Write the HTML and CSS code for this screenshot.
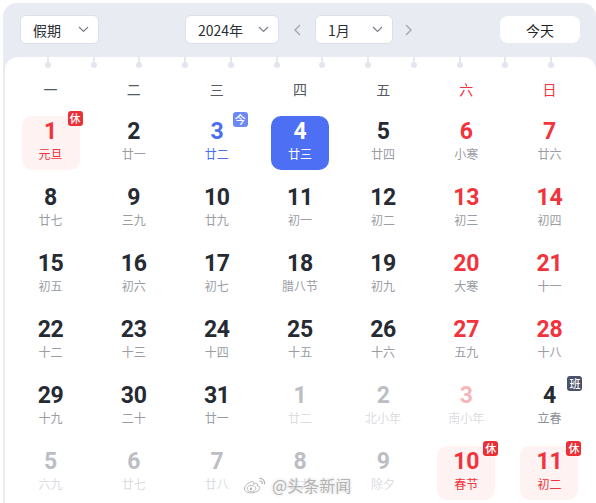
FILE: index.html
```html
<!DOCTYPE html>
<html lang="zh-CN">
<head>
<meta charset="utf-8">
<title>日历</title>
<link rel="stylesheet" href="styles.css">
</head>
<body>
<div class="panel">
  <div class="toolbar">
    <div class="select sel-holiday"><span>假期</span><svg class="chev" width="11" height="7" viewBox="0 0 11 7"><polyline points="1,1 5.5,5.5 10,1" fill="none" stroke="#7a7f8c" stroke-width="1.2"/></svg></div>
    <div class="select sel-year"><span>2024年</span><svg class="chev" width="11" height="7" viewBox="0 0 11 7"><polyline points="1,1 5.5,5.5 10,1" fill="none" stroke="#7a7f8c" stroke-width="1.2"/></svg></div>
    <div class="arrow arrow-prev"><svg width="7" height="12" viewBox="0 0 7 12"><polyline points="6,1 1,6 6,11" fill="none" stroke="#a3a7b2" stroke-width="1.4"/></svg></div>
    <div class="select sel-month"><span>1月</span><svg class="chev" width="11" height="7" viewBox="0 0 11 7"><polyline points="1,1 5.5,5.5 10,1" fill="none" stroke="#7a7f8c" stroke-width="1.2"/></svg></div>
    <div class="arrow arrow-next"><svg width="7" height="12" viewBox="0 0 7 12"><polyline points="1,1 6,6 1,11" fill="none" stroke="#a3a7b2" stroke-width="1.4"/></svg></div>
    <div class="today-btn">今天</div>
  </div>
  <div class="card">
    <div class="pegs">
      <i class="peg"></i><i class="peg"></i><i class="peg"></i><i class="peg"></i><i class="peg"></i><i class="peg"></i>
      <i class="peg"></i><i class="peg"></i><i class="peg"></i><i class="peg"></i><i class="peg"></i><i class="peg"></i>
    </div>
    <div class="weekdays">
      <div class="wd">一</div><div class="wd">二</div><div class="wd">三</div><div class="wd">四</div><div class="wd">五</div><div class="wd weekend">六</div><div class="wd weekend">日</div>
    </div>
    <div class="grid">
      <div class="cell"><div class="box hol red"><span class="num">1</span><span class="lunar fest">元旦</span><b class="badge b-rest">休</b></div></div>
      <div class="cell"><div class="box"><span class="num">2</span><span class="lunar">廿一</span></div></div>
      <div class="cell"><div class="box today"><span class="num">3</span><span class="lunar">廿二</span><b class="badge b-today">今</b></div></div>
      <div class="cell"><div class="box selected"><span class="num">4</span><span class="lunar">廿三</span></div></div>
      <div class="cell"><div class="box"><span class="num">5</span><span class="lunar">廿四</span></div></div>
      <div class="cell"><div class="box red"><span class="num">6</span><span class="lunar">小寒</span></div></div>
      <div class="cell"><div class="box red"><span class="num">7</span><span class="lunar">廿六</span></div></div>

      <div class="cell"><div class="box"><span class="num">8</span><span class="lunar">廿七</span></div></div>
      <div class="cell"><div class="box"><span class="num">9</span><span class="lunar">三九</span></div></div>
      <div class="cell"><div class="box"><span class="num">10</span><span class="lunar">廿九</span></div></div>
      <div class="cell"><div class="box"><span class="num">11</span><span class="lunar">初一</span></div></div>
      <div class="cell"><div class="box"><span class="num">12</span><span class="lunar">初二</span></div></div>
      <div class="cell"><div class="box red"><span class="num">13</span><span class="lunar">初三</span></div></div>
      <div class="cell"><div class="box red"><span class="num">14</span><span class="lunar">初四</span></div></div>

      <div class="cell"><div class="box"><span class="num">15</span><span class="lunar">初五</span></div></div>
      <div class="cell"><div class="box"><span class="num">16</span><span class="lunar">初六</span></div></div>
      <div class="cell"><div class="box"><span class="num">17</span><span class="lunar">初七</span></div></div>
      <div class="cell"><div class="box"><span class="num">18</span><span class="lunar">腊八节</span></div></div>
      <div class="cell"><div class="box"><span class="num">19</span><span class="lunar">初九</span></div></div>
      <div class="cell"><div class="box red"><span class="num">20</span><span class="lunar">大寒</span></div></div>
      <div class="cell"><div class="box red"><span class="num">21</span><span class="lunar">十一</span></div></div>

      <div class="cell"><div class="box"><span class="num">22</span><span class="lunar">十二</span></div></div>
      <div class="cell"><div class="box"><span class="num">23</span><span class="lunar">十三</span></div></div>
      <div class="cell"><div class="box"><span class="num">24</span><span class="lunar">十四</span></div></div>
      <div class="cell"><div class="box"><span class="num">25</span><span class="lunar">十五</span></div></div>
      <div class="cell"><div class="box"><span class="num">26</span><span class="lunar">十六</span></div></div>
      <div class="cell"><div class="box red"><span class="num">27</span><span class="lunar">五九</span></div></div>
      <div class="cell"><div class="box red"><span class="num">28</span><span class="lunar">十八</span></div></div>

      <div class="cell"><div class="box"><span class="num">29</span><span class="lunar">十九</span></div></div>
      <div class="cell"><div class="box"><span class="num">30</span><span class="lunar">二十</span></div></div>
      <div class="cell"><div class="box"><span class="num">31</span><span class="lunar">廿一</span></div></div>
      <div class="cell"><div class="box other"><span class="num">1</span><span class="lunar">廿二</span></div></div>
      <div class="cell"><div class="box other"><span class="num">2</span><span class="lunar">北小年</span></div></div>
      <div class="cell"><div class="box other other-red"><span class="num">3</span><span class="lunar">南小年</span></div></div>
      <div class="cell"><div class="box work"><span class="num">4</span><span class="lunar">立春</span><b class="badge b-work">班</b></div></div>

      <div class="cell"><div class="box other"><span class="num">5</span><span class="lunar">六九</span></div></div>
      <div class="cell"><div class="box other"><span class="num">6</span><span class="lunar">廿七</span></div></div>
      <div class="cell"><div class="box other"><span class="num">7</span><span class="lunar">廿八</span></div></div>
      <div class="cell"><div class="box other"><span class="num">8</span><span class="lunar">廿九</span></div></div>
      <div class="cell"><div class="box other"><span class="num">9</span><span class="lunar">除夕</span></div></div>
      <div class="cell"><div class="box hol red"><span class="num">10</span><span class="lunar fest">春节</span><b class="badge b-rest">休</b></div></div>
      <div class="cell"><div class="box hol red"><span class="num">11</span><span class="lunar fest">初二</span><b class="badge b-rest">休</b></div></div>
    </div>
  </div>
</div>
<div class="watermark">
  <svg class="wb-logo" width="25" height="18" viewBox="0 0 25 18">
    <path d="M9.5 5.5 C5 6.5 1 10 1.5 13 C2 16.5 7 17.5 11 16.5 C15.5 15.5 17.5 13 16.5 11 C16 10 15 9.8 14.2 10 C14.8 8.5 14.5 7.2 12.8 7.4 C12 7.5 11 7.9 10.5 8.2 C11 6.8 11 5.2 9.5 5.5 Z" fill="#fff" stroke="#b5b5b5" stroke-width="1"/>
    <ellipse cx="8.5" cy="12.5" rx="4.2" ry="3" fill="none" stroke="#b5b5b5" stroke-width="0.9"/>
    <circle cx="8" cy="12.8" r="1.3" fill="#b5b5b5"/>
    <path d="M16.5 2.5 C19.5 2.2 22 4.5 21.6 7.8" fill="none" stroke="#b5b5b5" stroke-width="1.2" stroke-linecap="round"/>
    <path d="M16.8 5 C18.5 4.9 19.5 6 19.2 7.6" fill="none" stroke="#b5b5b5" stroke-width="1.1" stroke-linecap="round"/>
  </svg>
  <span class="wb-text">@头条新闻</span>
</div>
</body>
</html>
```

FILE: styles.css
```css
html, body {
  margin: 0;
  padding: 0;
  background: #ffffff;
  overflow: hidden;
}
body {
  width: 596px;
  height: 503px;
  position: relative;
  font-family: "Noto Sans CJK SC", "Noto Sans", sans-serif;
}
.panel {
  margin: 3px 0 0 3px;
  height: 500px;
  background: #e9ebf3;
  border-radius: 14px 14px 0 0;
  display: flex;
  flex-direction: column;
  overflow: hidden;
}
.toolbar {
  flex: 0 0 54px;
  height: 54px;
  box-sizing: border-box;
  padding: 12px 16px 0 17px;
  display: flex;
  align-items: flex-start;
}
.select {
  height: 29px;
  box-sizing: border-box;
  background: #fff;
  border: 1px solid #dde0e8;
  border-radius: 6px;
  display: flex;
  align-items: center;
  justify-content: space-between;
  padding: 0 9px 0 12px;
  font-size: 14px;
  color: #2a2d33;
}
.select span { line-height: 20px; }
.sel-holiday { width: 79px; }
.sel-year { width: 94px; margin-left: 86px; }
.sel-month { width: 78px; }
.arrow {
  height: 29px;
  display: flex;
  align-items: center;
  justify-content: center;
}
.arrow-prev { width: 36px; }
.arrow-next { width: 30px; }
.today-btn {
  margin-left: auto;
  margin-top: 1px;
  width: 80px;
  height: 27px;
  background: #fff;
  border-radius: 8px;
  display: flex;
  align-items: center;
  justify-content: center;
  font-size: 14px;
  color: #222;
}
.card {
  flex: 1 1 auto;
  min-height: 0;
  margin-left: 2px;
  background: #fff;
  border-radius: 13px 13px 0 0;
}
.pegs {
  display: grid;
  grid-template-columns: repeat(12, 1fr);
  padding: 0 22px 0 20px;
  height: 13px;
}
.peg {
  position: relative;
  justify-self: center;
  width: 6px;
  height: 11px;
}
.peg::before {
  content: "";
  position: absolute;
  left: 2px;
  top: 0;
  width: 2px;
  height: 6px;
  background: #e6e8ef;
}
.peg::after {
  content: "";
  position: absolute;
  left: 0;
  top: 5px;
  width: 6px;
  height: 6px;
  border-radius: 50%;
  background: #e3e5ee;
}
.weekdays {
  display: grid;
  grid-template-columns: repeat(7, 1fr);
  height: 40px;
  padding: 0 5px 0 4px;
}
.wd {
  display: flex;
  align-items: center;
  justify-content: center;
  font-size: 14px;
  color: #555a63;
  padding-bottom: 3px;
}
.wd.weekend { color: #f2363e; }
.grid {
  display: grid;
  grid-template-columns: repeat(7, 1fr);
  grid-auto-rows: 66px;
  padding: 0 5px 0 4px;
}
.cell {
  display: flex;
  align-items: center;
  justify-content: center;
}
.box {
  position: relative;
  width: 58px;
  height: 54px;
  box-sizing: border-box;
  padding-top: 4px;
  border-radius: 10px;
  display: flex;
  flex-direction: column;
  align-items: center;
}
.num {
  font-family: Roboto, "Liberation Sans", sans-serif;
  font-weight: 700;
  font-size: 23px;
  line-height: 24px;
  color: #262a33;
  letter-spacing: -0.3px;
}
.lunar {
  margin-top: 2px;
  font-size: 12px;
  line-height: 16px;
  color: #9a9da4;
}
.red .num { color: #f2333b; }
.lunar.fest { color: #f2333b; }
.hol { background: #fef2f2; }
.today .num, .today .lunar { color: #4b6ef2; }
.selected { background: #4d6ff3; }
.selected .num, .selected .lunar { color: #fff; }
.other .num { color: #bcbec4; }
.other .lunar { color: #dcdde1; }
.other-red .num { color: #f7b7ba; }
.work .lunar { color: #8c8f96; }
.badge {
  position: absolute;
  top: -5px;
  right: -3px;
  width: 15px;
  height: 15px;
  border-radius: 3px;
  font-size: 11px;
  line-height: 15px;
  font-weight: 500;
  color: #fff;
  text-align: center;
}
.b-rest { background: #ec2f37; }
.b-today { background: #6c88f2; top: -4px; right: -2px; }
.b-work { background: #4b5169; top: -4px; right: -4px; }
.watermark {
  position: absolute;
  left: 243px;
  top: 476px;
  display: flex;
  align-items: center;
  gap: 4px;
}
.wb-text {
  font-size: 16px;
  line-height: 18px;
  color: #b2b2b2;
  text-shadow: 0 0 2px #fff, 0 0 2px #fff, 0 0 3px rgba(0,0,0,0.25);
}
```
